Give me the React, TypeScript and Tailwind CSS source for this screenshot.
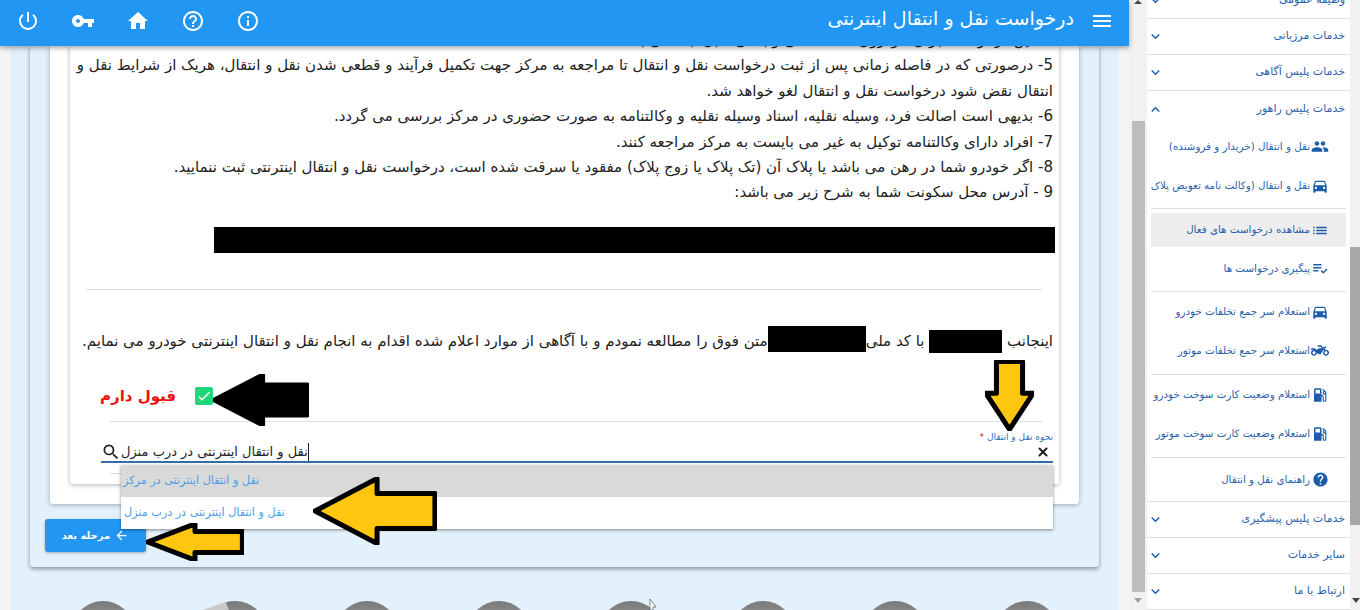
import React from 'react';
import {
  MdArrowBack, MdCheck, MdDirectionsCar, MdExpandLess, MdExpandMore, MdHelp, MdHelpOutline, MdHome, MdInfoOutline,
  MdList, MdLocalGasStation, MdMenu, MdPeople, MdPlaylistAddCheck, MdPowerSettingsNew, MdSearch, MdTwoWheeler, MdVpnKey,
} from 'react-icons/md';
import { X } from 'lucide-react';

const Arrow = ({ points, fill, className }: { points: string; fill: string; className: string }) => (
  <svg className={`absolute ${className}`} viewBox="0 0 120 90" preserveAspectRatio="none">
    <polygon points={points} fill={fill} stroke="#000" strokeWidth="5" strokeLinejoin="round" vectorEffect="non-scaling-stroke" />
  </svg>
);

const SubItem = ({ icon, label, active }: { icon: React.ReactNode; label: string; active?: boolean }) => (
  <div className={`flex items-center pr-[17px] overflow-hidden whitespace-nowrap text-[10.3px] text-[#2a62ab] ${active ? 'h-[34px] bg-[#eeeeee]' : 'h-[39px]'}`}>
    <span className="shrink-0 w-[18px] flex justify-center text-[#1b5cab]">{icon}</span>
    <span className="pr-px">{label}</span>
  </div>
);

const Group = ({ label, open }: { label: string; open?: boolean }) => (
  <div className={`h-[36px] flex items-center justify-between pr-[5px] text-[11px] text-[#2a62ab] ${open ? '' : 'border-b border-[#e0e0e0]'}`}>
    <span>{label}</span>
    {open ? <MdExpandLess size={17} className="text-[#1b5cab]" /> : <MdExpandMore size={17} className="text-[#1b5cab]" />}
  </div>
);

const Hr = ({ className }: { className: string }) => <div className={`h-px bg-[#e0e0e0] ${className}`} />;

const Sidebar = () => (
  <aside dir="rtl" className="w-[203px] shrink-0 bg-white -mt-[17px]">
    <Group label="وظیفه عمومی" />
    <Group label="خدمات مرزبانی" />
    <Group label="خدمات پلیس آگاهی" />
    <Group label="خدمات پلیس راهور" open />
    <div className="mx-[4px] h-[374px]">
      <SubItem icon={<MdPeople size={19} />} label="نقل و انتقال (خریدار و فروشنده)" />
      <SubItem icon={<MdDirectionsCar size={18} />} label="نقل و انتقال (وکالت نامه تعویض پلاک)" />
      <Hr className="mt-[3px] mb-[4px]" />
      <SubItem active icon={<MdList size={19} />} label="مشاهده درخواست های فعال" />
      <div className="h-[2px]" />
      <SubItem icon={<MdPlaylistAddCheck size={19} />} label="پیگیری درخواست ها" />
      <Hr className="mt-[3px]" />
      <SubItem icon={<MdDirectionsCar size={18} />} label="استعلام سر جمع تخلفات خودرو" />
      <SubItem icon={<MdTwoWheeler size={21} />} label="استعلام سر جمع تخلفات موتور" />
      <Hr className="mt-[4px]" />
      <SubItem icon={<MdLocalGasStation size={20} />} label="استعلام وضعیت کارت سوخت خودرو" />
      <SubItem icon={<MdLocalGasStation size={20} />} label="استعلام وضعیت کارت سوخت موتور" />
      <Hr className="mt-[4px] mb-[2px]" />
      <SubItem icon={<MdHelp size={17} />} label="راهنمای نقل و انتقال" />
    </div>
    <div className="border-t border-[#e0e0e0]">
      <Group label="خدمات پلیس پیشگیری" />
      <Group label="سایر خدمات" />
      <Group label="ارتباط با ما" />
    </div>
  </aside>
);

const textLines = [
  '4- این درخواست برای خودروی فاقد خلافی و بدهی قابل ثبت می باشد.',
  '5- درصورتی که در فاصله زمانی پس از ثبت درخواست نقل و انتقال تا مراجعه به مرکز جهت تکمیل فرآیند و قطعی شدن نقل و انتقال، هریک از شرایط نقل و',
  'انتقال نقض شود درخواست نقل و انتقال لغو خواهد شد.',
  '6- بدیهی است اصالت فرد، وسیله نقلیه، اسناد وسیله نقلیه و وکالتنامه به صورت حضوری در مرکز بررسی می گردد.',
  '7- افراد دارای وکالتنامه توکیل به غیر می بایست به مرکز مراجعه کنند.',
  '8- اگر خودرو شما در رهن می باشد یا پلاک آن (تک پلاک یا زوج پلاک) مفقود یا سرقت شده است، درخواست نقل و انتقال اینترنتی ثبت ننمایید.',
  '9 - آدرس محل سکونت شما به شرح زیر می باشد:',
];

const circles = ['a', 'c', 'd', 'e', 'f', 'g'];

export default function App() {
  return (
    <div className="relative w-[1360px] h-[610px] overflow-hidden flex bg-white font-['DejaVu_Sans','Noto_Sans',sans-serif]">
      <main className="w-[1129px] shrink-0 flex flex-col relative">
        <header dir="rtl" className="relative z-10 h-[46px] shrink-0 pb-[6px] pt-[1px] bg-[#2196f3] flex items-center justify-between text-white shadow-[0_2px_5px_rgba(0,0,0,0.35)]">
          <div className="flex items-center pr-[15px] gap-[16px]">
            <MdMenu size={24} />
            <h1 className="text-[19px] leading-none pb-[4px]">درخواست نقل و انتقال اینترنتی</h1>
          </div>
          <div className="flex items-center pl-[16px] gap-[31px]">
            <MdInfoOutline size={24} />
            <MdHelpOutline size={24} />
            <MdHome size={24} />
            <MdVpnKey size={24} />
            <MdPowerSettingsNew size={24} />
          </div>
        </header>

        <div className="flex-1 overflow-hidden bg-[#f5f5f5] px-[10px]">
          <div className="h-full bg-[#e3f1fc] px-[20px]">
            <section className="h-[521px] bg-[#e3f1fc] rounded-b-[3px] shadow-[0_2px_4px_rgba(0,0,0,0.4)] px-[20px] flow-root">
              <div className="h-[458px] bg-white rounded-b-[3px] shadow-[0_1px_5px_rgba(0,0,0,0.3)] px-[20px] flow-root">
                <div dir="rtl" className="relative h-[438px] bg-white rounded-b-[3px] shadow-[0_1px_5px_rgba(0,0,0,0.3)] px-[6px] flow-root">
                  <div className="-mt-[18px] text-[15px] leading-[25.4px] text-[#222] whitespace-nowrap">
                    {textLines.map((t) => <p key={t}>{t}</p>)}
                  </div>
                  <div className="bg-black h-[26px] -mr-[2px] mt-[21px] w-[841px]" />
                  <Hr className="mt-[36px] ml-[10px] mr-[11px]" />
                  <p className="mt-[36px] text-[15px] leading-[26px] text-[#222] whitespace-nowrap">
                    اینجانب <span className="inline-block w-[73px] h-[23px] bg-black align-[-7px]" /> با کد ملی<span className="inline-block w-[98px] h-[26px] bg-black align-[-6px]" />متن فوق را مطالعه نمودم و با آگاهی از موارد اعلام شده اقدام به انجام نقل و انتقال اینترنتی خودرو می نمایم.
                  </p>
                  <div className="mt-[24px] h-[36px] flex items-center justify-end gap-[19px] pl-[24px]">
                    <span className="w-[18px] h-[18px] rounded-[2px] bg-[#1fd67a] flex items-center justify-center text-white"><MdCheck size={16} /></span>
                    <span className="text-[15px] font-bold text-[#ee1111]">قبول دارم</span>
                  </div>
                  <Hr className="mt-[7px] ml-[34px] mr-[11px]" />
                  <div className="mt-[9px] ml-[25px] text-[9px] leading-[12px] text-[#2a72c4]">نحوه نقل و انتقال <span className="text-[#e01010]">*</span></div>
                  <div className="ml-[25px] h-[20px] border-b-2 border-[#336fa5] flex items-center justify-between">
                    <X size={14} strokeWidth={3.5} className="mr-[3px] text-[#222]" />
                    <div className="flex items-center text-[13px] font-medium text-[#222]">
                      <span className="border-r border-[#222] leading-[18px]">نقل و انتقال اینترنتی در درب منزل</span>
                      <MdSearch size={20} />
                    </div>
                  </div>
                  <Hr className="mt-[10px] ml-[34px] mr-[11px]" />
                </div>
              </div>
              <button dir="rtl" className="mt-[15px] -ml-[5px] w-[101px] h-[33px] rounded-[3px] bg-[#2196f3] text-white text-[10px] font-bold flex items-center justify-center gap-1 shadow-[0_1px_3px_rgba(0,0,0,0.3)]">
                <MdArrowBack size={15} />
                <span>مرحله بعد</span>
              </button>
            </section>
            <div className="mt-[34px] pl-[41px] flex gap-[68px]">
              <div className="w-[64px] h-[64px] shrink-0 rounded-full bg-gradient-to-b from-[#7a7a7a] to-[#c5c5c5]" />
              <div className="relative w-[64px] h-[64px] shrink-0 rounded-full bg-gradient-to-b from-[#7a7a7a] to-[#c5c5c5]">
                <div className="absolute -left-[2px] top-[5px] w-[28px] h-[14px] bg-[#c9c9c9] -rotate-[20deg]" />
              </div>
              {circles.map((c) => (
                <div key={c} className="w-[64px] h-[64px] shrink-0 rounded-full bg-gradient-to-b from-[#7a7a7a] to-[#c5c5c5]" />
              ))}
              <div className="w-[64px] h-[64px] shrink-0 rounded-full bg-gradient-to-b from-[#1976d2] to-[#42a5f5]" />
            </div>
          </div>
        </div>

        {/* dropdown list of the select, lies over the cards */}
        <div dir="rtl" className="absolute z-20 left-[121px] top-[465px] w-[932px] shadow-[0_1px_3px_rgba(0,0,0,0.45)] text-[11.2px] text-[#4c9ee6]">
          <div className="h-[32px] bg-[#d9d9d9] flex items-center justify-end pl-[2px]">نقل و انتقال اینترنتی در مرکز</div>
          <div className="h-[32px] bg-white flex items-center justify-end pl-[3px]">نقل و انتقال اینترنتی در درب منزل</div>
        </div>
      </main>

      <div className="relative shrink-0 w-[18px] bg-[#f1f1f1]">
        <div className="absolute left-[3px] w-[13px] top-[121px] h-[471px] bg-[#bdbdbd]" />
        <div className="absolute left-[5px] top-0 w-0 h-0 border-x-[4px] border-x-transparent border-b-[4px] border-b-[#444]" />
        <div className="absolute left-[5px] top-[598px] w-0 h-0 border-x-[4px] border-x-transparent border-t-[5px] border-t-[#a0a0a0]" />
      </div>
      <Sidebar />
      <div className="relative shrink-0 w-[10px] bg-[#f1f1f1]">
        <div className="absolute inset-x-0 top-[247px] h-[278px] bg-[#a8a8a8]" />
        <div className="absolute left-[2px] top-[598px] w-0 h-0 border-x-[4px] border-x-transparent border-t-[5px] border-t-[#444]" />
      </div>

      {/* annotation arrows drawn on top of the screenshot */}
      <Arrow className="z-30 left-[213px] top-[374px] w-[96px] h-[52px]" fill="#000" points="2,45 62,2 62,19 118,19 118,71 62,71 62,88" />
      <Arrow className="z-30 left-[985px] top-[360px] w-[49px] h-[71px]" fill="#ffc60f" points="28,2 92,2 92,42 118,42 60,88 2,42 28,42" />
      <Arrow className="z-30 left-[313px] top-[477px] w-[124px] h-[68px]" fill="#ffc60f" points="2,45 62,2 62,22 118,22 118,68 62,68 62,88" />
      <Arrow className="z-30 left-[146px] top-[523px] w-[98px] h-[38px]" fill="#ffc60f" points="2,45 60,2 60,20 118,20 118,70 60,70 60,88" />
      <svg className="absolute z-30 left-[648px] top-[599px] w-[10px] h-[11px]" viewBox="0 0 10 11"><polygon points="2,0 8,8 5,8 5,11 2,11" fill="#fff" stroke="#555" strokeWidth="0.7" /></svg>
    </div>
  );
}
